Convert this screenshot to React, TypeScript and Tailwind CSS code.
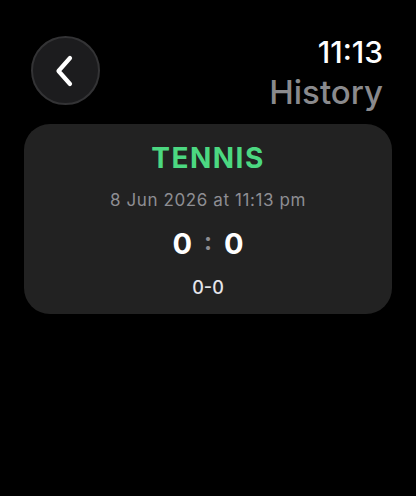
import React from 'react';

function BackButton() {
  return (
    <button className="w-[69px] h-[69px] rounded-full bg-[#1c1c1e] border-2 border-[#333335] flex items-center justify-center">
      <svg width="24" height="32" viewBox="0 0 24 32" fill="none" className="-ml-[2px]">
        <path d="M17 3 L5.5 16 L17 29" stroke="#ffffff" strokeWidth="4.2" strokeLinecap="round" strokeLinejoin="round" />
      </svg>
    </button>
  );
}

export default function App() {
  return (
    <div className="w-[416px] h-[496px] bg-black overflow-hidden" style={{ fontFamily: 'Inter, "Noto Sans", sans-serif' }}>
      <div className="flex justify-between items-start pl-[31px] pr-[33px] pt-[36px]">
        <BackButton />
        <div className="flex flex-col items-end">
          <span className="text-white text-[30px] leading-[30px] font-medium mt-[1px]">11:13</span>
          <span className="text-[#8a8a8d] text-[33px] leading-[33px] font-medium mt-[9px]">History</span>
        </div>
      </div>

      <div className="mx-[24px] mt-[15px] h-[190px] rounded-[26px] bg-[#222222] flex flex-col items-center pt-[20px]">
        <span className="text-[#4cd881] text-[28px] leading-[28px] font-bold tracking-[1.5px]">TENNIS</span>
        <span className="text-[#8e8e93] text-[17px] leading-[17px] mt-[20px] tracking-[0.6px]">8 Jun 2026 at 11:13 pm</span>
        <div className="flex items-center gap-[12px] mt-[20px] text-white text-[29px] leading-[29px] font-bold">
          <span>0</span>
          <span className="text-[#8e8e93] text-[24px] leading-[24px] -mt-[3px]">:</span>
          <span>0</span>
        </div>
        <span className="text-[#e5e5ea] text-[18px] leading-[18px] font-medium mt-[21px]">0-0</span>
      </div>
    </div>
  );
}
